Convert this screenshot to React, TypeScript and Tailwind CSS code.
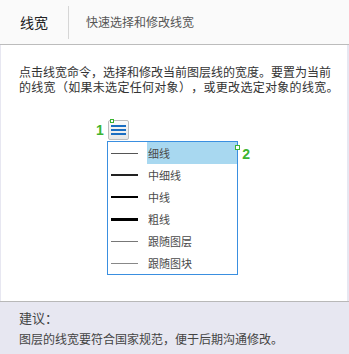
import { Fragment } from "react";

const font = { fontFamily: '"Noto Sans CJK SC", "Noto Sans", sans-serif' };

// line samples for each weight option
const options = [
  { label: "细线", line: "h-px bg-[#555]" },
  { label: "中细线", line: "h-[2px] bg-[#222]" },
  { label: "中线", line: "h-[2px] bg-black" },
  { label: "粗线", line: "h-[3px] bg-black" },
  { label: "跟随图层", line: "h-px bg-[#777]" },
  { label: "跟随图块", line: "h-px bg-[#888]" },
];

function Marker({ n }: { n: string }) {
  return (
    <span className="text-[14px] font-bold leading-none text-[#3cb431]" style={{ fontFamily: '"Liberation Sans", sans-serif' }}>
      {n}
    </span>
  );
}

export default function App() {
  return (
    <div className="flex h-[354px] w-[349px] flex-col bg-[#e7e7f1] text-[#333] [text-spacing-trim:space-all]" style={font}>
      {/* Header */}
      <div className="flex h-[45px] shrink-0 items-center border-b border-[#bcbcbc] bg-[#fafafa]">
        <div className="w-[68px] pl-[20px] text-[14px] text-[#222]">线宽</div>
        <div className="h-[33px] w-px bg-[#d6d6d6]" />
        <div className="pl-[17px] text-[12px] text-[#555]">快速选择和修改线宽</div>
      </div>

      {/* Body */}
      <div className="ml-px mr-[2px] flex h-[256px] shrink-0 flex-col bg-white">
        <div className="px-[18px] pt-[19px] text-[12px] leading-[15px] text-[#333]">
          <div className="whitespace-nowrap">点击线宽命令，选择和修改当前图层线的宽度。要置为当前</div>
          <div className="whitespace-nowrap tracking-[0.3px]">的线宽（如果未选定任何对象），或更改选定对象的线宽。</div>
        </div>

        <div className="mt-[26px] ml-[95px] flex flex-col">
          {/* toolbar button */}
          <div className="flex items-start">
            <div className="mr-[4px] mt-[-4px]">
              <Marker n="1" />
            </div>
            <div className="relative flex h-[20px] w-[21px] flex-col items-center justify-center gap-[2px] rounded-[2px] border border-[#bdbdbd] bg-gradient-to-b from-[#fbfbfb] to-[#e6e6e6]">
              <span className="absolute left-[1px] top-[-2px] h-[4px] w-[4px] border border-[#3cb431] bg-white" />
              <span className="h-[2px] w-[15px] bg-[#1b6ec2]" />
              <span className="h-[2px] w-[15px] bg-[#1b6ec2]" />
              <span className="h-[2px] w-[15px] bg-[#1b6ec2]" />
            </div>
          </div>

          {/* dropdown list */}
          <div className="relative mt-[1px] ml-[11px] w-[131px] border border-[#3a8fe0] bg-white">
            {options.map((o, i) => (
              <Fragment key={o.label}>
                <div className="flex h-[22px] items-center">
                  <div className="flex w-[39px] justify-start pl-[3px]">
                    <span className={`block w-[27px] ${o.line}`} />
                  </div>
                  <div
                    className={
                      i === 0
                        ? "flex h-full flex-1 items-center bg-[#a8d8f0] pl-px text-[11px] text-[#4a4a4a]"
                        : "flex h-full flex-1 items-center pl-px text-[11px] text-[#4a4a4a]"
                    }
                  >
                    {o.label}
                  </div>
                </div>
              </Fragment>
            ))}
            <div className="absolute right-[-3px] top-[3px]">
              <span className="block h-[5px] w-[5px] border border-[#3cb431] bg-white" />
            </div>
            <div className="absolute right-[-13px] top-[-2px]">
              <Marker n="2" />
            </div>
          </div>
        </div>
      </div>

      {/* Suggestion */}
      <div className="flex flex-1 flex-col border-t border-[#b8b8b8] px-[19px] pt-[6px]">
        <div className="text-[13px] leading-[20px] text-[#444]">建议：</div>
        <div className="mt-[3px] text-[12px] leading-[16px] text-[#444]">图层的线宽要符合国家规范，便于后期沟通修改。</div>
      </div>
    </div>
  );
}
